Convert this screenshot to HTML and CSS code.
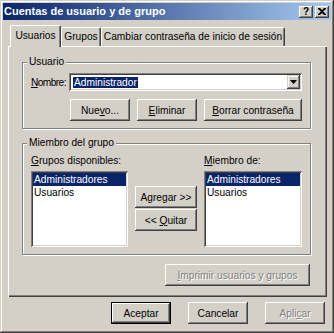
FILE: index.html
```html
<!DOCTYPE html>
<html lang="es">
<head>
<meta charset="utf-8">
<title>Cuentas de usuario y de grupo</title>
<link rel="stylesheet" href="styles.css">
</head>
<body>
<div class="window">
  <div class="titlebar">
    <span class="title">Cuentas de usuario y de grupo</span>
    <div class="tb-buttons">
      <span class="tb-btn help">?</span>
      <span class="tb-btn close"><svg width="8" height="7" viewBox="0 0 8 7"><path d="M0 0h2l2 2 2-2h2v1L5 3.5 8 6v1H6L4 5 2 7H0V6l3-2.5L0 1z" fill="#000"/></svg></span>
    </div>
  </div>
  <div class="client">
    <div class="tabs">
      <div class="tab active t-usuarios">Usuarios</div>
      <div class="tab t-grupos">Grupos</div>
      <div class="tab t-cambiar">Cambiar contraseña de inicio de sesión</div>
    </div>
    <div class="panel">
      <fieldset class="group group-user">
        <legend>Usuario</legend>
        <div class="name-row">
          <span class="name-label"><u>N</u>ombre:</span>
          <div class="combo">
            <span class="combo-text"><span class="sel">Administrador</span></span>
            <span class="combo-btn"><svg width="7" height="4" viewBox="0 0 7 4"><path d="M0 0h7L3.5 4z" fill="#000"/></svg></span>
          </div>
        </div>
        <div class="user-buttons">
          <button class="btn w60">Nue<u>v</u>o...</button>
          <button class="btn w60"><u>E</u>liminar</button>
          <button class="btn w98"><u>B</u>orrar contraseña</button>
        </div>
      </fieldset>
      <fieldset class="group group-member">
        <legend>Miembro del grupo</legend>
        <div class="member-grid">
          <span class="col-label"><u>G</u>rupos disponibles:</span>
          <span></span>
          <span class="col-label"><u>M</u>iembro de:</span>
          <div class="listbox">
            <div class="item selected">Administradores</div>
            <div class="item">Usuarios</div>
          </div>
          <div class="move-buttons">
            <button class="btn">A<u>g</u>regar &gt;&gt;</button>
            <button class="btn">&lt;&lt; <u>Q</u>uitar</button>
          </div>
          <div class="listbox">
            <div class="item selected">Administradores</div>
            <div class="item">Usuarios</div>
          </div>
        </div>
      </fieldset>
      <button class="btn disabled print-btn"><u>I</u>mprimir usuarios y grupos</button>
    </div>
    <div class="dialog-buttons">
      <button class="btn default w60">Aceptar</button>
      <button class="btn w60">Cancelar</button>
      <button class="btn disabled w60">Apli<u>c</u>ar</button>
    </div>
  </div>
</div>
</body>
</html>
```

FILE: styles.css
```css
* { box-sizing: border-box; }
html, body { margin: 0; padding: 0; }
body {
  width: 334px;
  height: 333px;
  overflow: hidden;
  background: #d4d0c8;
  font-family: "Liberation Sans", Arial, sans-serif;
  font-size: 10.2px;
  color: #000;
}
.window {
  width: 334px;
  height: 333px;
  padding: 3px;
  background: #d4d0c8;
  box-shadow: inset -1px -1px #404040, inset 1px 1px #d4d0c8, inset -2px -2px #808080, inset 2px 2px #fff;
  display: flex;
  flex-direction: column;
}
.titlebar {
  height: 17px;
  background: linear-gradient(90deg, #0a246a, #a6caf0);
  display: flex;
  align-items: center;
  justify-content: space-between;
  padding: 0 2px 0 1px;
}
.title {
  color: #fff;
  font-weight: bold;
  font-size: 11px;
  line-height: 13px;
  white-space: nowrap;
}
.tb-buttons { display: flex; gap: 2px; }
.tb-btn {
  width: 14px;
  height: 12px;
  background: #d4d0c8;
  box-shadow: inset -1px -1px #404040, inset 1px 1px #fff, inset -2px -2px #808080;
  display: flex;
  align-items: center;
  justify-content: center;
  font-weight: bold;
  font-size: 10px;
  line-height: 10px;
}
.client {
  padding: 5px 0 0 5px;
  display: flex;
  flex-direction: column;
}
.tabs {
  display: flex;
  align-items: flex-end;
  height: 21px;
  padding-left: 2px;
}
.tab {
  height: 19px;
  background: #d4d0c8;
  border-top: 1px solid #fff;
  border-left: 1px solid #fff;
  border-right: 1px solid #404040;
  border-radius: 2px 2px 0 0;
  box-shadow: inset -1px 0 #808080;
  display: flex;
  align-items: center;
  justify-content: center;
  white-space: nowrap;
  padding-bottom: 1px;
}
.tab.active {
  height: 22px;
  margin-bottom: -1px;
  position: relative;
  z-index: 1;
  padding-bottom: 3px;
}
.t-usuarios { width: 51px; }
.t-grupos { width: 40px; }
.t-cambiar { width: 184px; }
.panel {
  width: 319px;
  height: 251px;
  background: #d4d0c8;
  box-shadow: inset 1px 1px #fff, inset -1px -1px #404040, inset -2px -2px #808080;
  padding: 10px 16px 0 14px;
  display: flex;
  flex-direction: column;
}
.group {
  margin: 0;
  min-width: 0;
  border: 1px solid #808080;
  box-shadow: inset 1px 1px #fff, 1px 1px #fff;
  padding: 0 7px 7px 8px;
}
.group legend {
  padding: 0 2px;
  margin-left: -4px;
  line-height: 12px;
  background: #d4d0c8;
}
.name-row {
  display: flex;
  align-items: center;
  margin-top: 5px;
  height: 18px;
}
.name-label { width: 38px; white-space: nowrap; letter-spacing: -0.6px; }
.combo {
  width: 233px;
  height: 18px;
  background: #fff;
  box-shadow: inset 1px 1px #808080, inset -1px -1px #fff, inset 2px 2px #404040, inset -2px -2px #d4d0c8;
  padding: 2px;
  display: flex;
}
.combo-text {
  flex: 1;
  display: flex;
  align-items: center;
  padding-left: 2px;
}
.sel {
  background: #0a246a;
  color: #fff;
  line-height: 11px;
  padding: 0 1px;
}
.combo-btn {
  width: 13px;
  height: 14px;
  background: #d4d0c8;
  box-shadow: inset -1px -1px #404040, inset 1px 1px #d4d0c8, inset -2px -2px #808080, inset 2px 2px #fff;
  display: flex;
  align-items: center;
  justify-content: center;
}
.user-buttons {
  display: flex;
  justify-content: flex-end;
  gap: 7px;
  margin-top: 8px;
  padding-right: 1px;
}
.btn {
  height: 22px;
  margin: 0;
  padding: 0;
  border: none;
  background: #d4d0c8;
  box-shadow: inset -1px -1px #404040, inset 1px 1px #fff, inset -2px -2px #808080;
  font: inherit;
  color: #000;
  white-space: nowrap;
}
.w60 { width: 60px; }
.w98 { width: 98px; }
.btn.default {
  box-shadow: inset 0 0 0 1px #000, inset -2px -2px #404040, inset 2px 2px #fff, inset -3px -3px #808080;
}
.btn.disabled {
  color: #808080;
  text-shadow: 1px 1px #fff;
}
.group-member { margin-top: 8px; }
.member-grid {
  display: grid;
  grid-template-columns: 97px 62px 98px;
  grid-template-rows: 12px 76px;
  column-gap: 7px;
  row-gap: 4px;
  margin-top: 6px;
}
.col-label { line-height: 12px; white-space: nowrap; }
.listbox {
  background: #fff;
  box-shadow: inset 1px 1px #808080, inset -1px -1px #fff, inset 2px 2px #404040, inset -2px -2px #d4d0c8;
  padding: 2px;
}
.item {
  line-height: 13px;
  padding-left: 1px;
  white-space: nowrap;
}
.item.selected { background: #0a246a; color: #fff; }
.move-buttons {
  display: flex;
  flex-direction: column;
  gap: 1px;
  padding-top: 15px;
}
.move-buttons .btn { width: 62px; }
.print-btn {
  width: 145px;
  align-self: flex-end;
  margin-top: 9px;
  margin-right: 1px;
}
.dialog-buttons {
  width: 319px;
  display: flex;
  justify-content: flex-end;
  gap: 17px;
  margin-top: 5px;
  padding-right: 2px;
}
```
